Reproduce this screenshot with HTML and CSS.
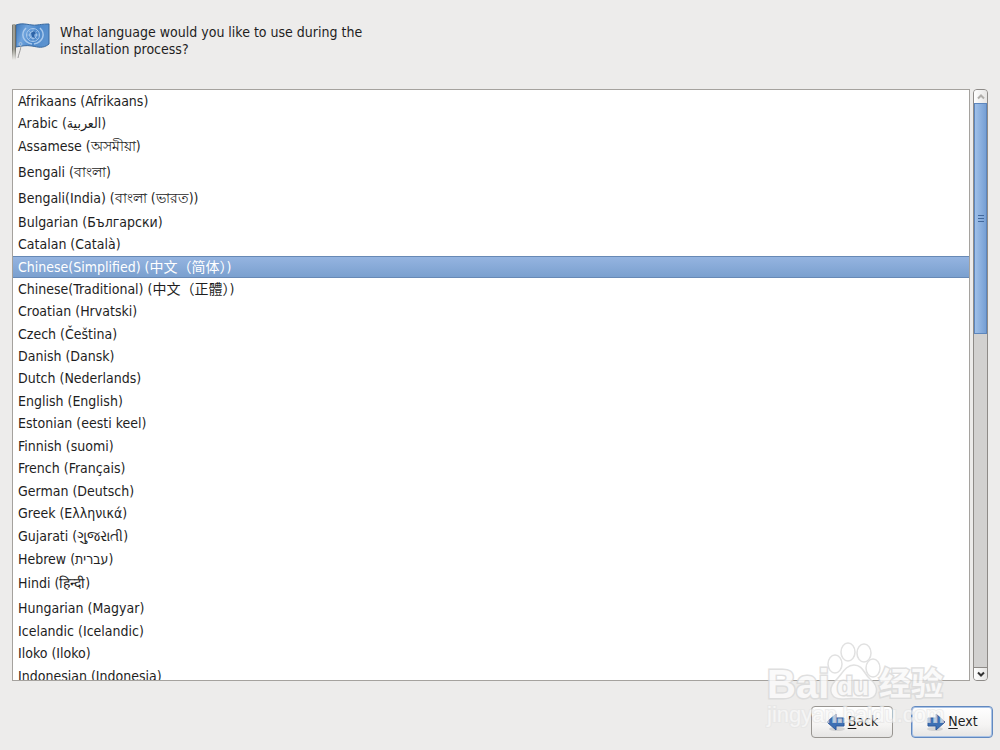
FILE: index.html
```
<!DOCTYPE html>
<html lang="en">
<head>
<meta charset="utf-8">
<title>Installation language</title>
<link rel="stylesheet" href="styles.css">
</head>
<body>
<form class="installer">
  <header class="prompt">
    <svg class="flag" viewBox="0 0 40 40" aria-hidden="true">
      <defs>
        <linearGradient id="cloth" x2="1" y2=".3"><stop offset="0" stop-color="#3f78ba"/><stop offset=".35" stop-color="#6ea3dd"/><stop offset=".65" stop-color="#4c88cb"/><stop offset="1" stop-color="#5b92cf"/></linearGradient>
        <linearGradient id="pole"><stop offset="0" stop-color="#66665f"/><stop offset=".5" stop-color="#b5b5aa"/><stop offset="1" stop-color="#55554f"/></linearGradient>
        <linearGradient id="fade" x2="0" y2="1"><stop offset=".7" stop-color="#ecebe9" stop-opacity="0"/><stop offset="1" stop-color="#ecebe9"/></linearGradient>
      </defs>
      <path d="M4 4C12 1 18 5 25 4S34 3 37 3V23C31 28 26 26 20 25S10 25 4 26Z" fill="url(#cloth)" stroke="#39699f"/>
      <g fill="none" stroke="#a9c9ec">
        <circle cx="21" cy="14" r="6.500"/><circle cx="21" cy="14" r="3.500" fill="#6b9fd9"/>
        <path d="M14 7C8 13 11 21 20 23M28 7C34 13 31 21 22 23" stroke-width="1.5"/>
        <path d="M21 8V20M15 14H27M16 9L26 19M26 9L16 19" stroke-width=".6"/>
      </g>
      <path d="M19 12l3-2 2 2-2 2 1 3-3-1z" fill="#2c64a8"/>
      <path d="M0 4Q2 2 4 4V39H0Z" fill="url(#pole)"/>
      <path d="M0 4Q2 2 4 4V39H0Z" fill="url(#fade)"/>
      <path d="M8 24C10 27 7 31 6 37M8 21V25" fill="none" stroke="#999"/>
      <circle cx="8.500" cy="23" r="1.500" fill="#6aa0dc" stroke="#c8d8e8" stroke-width=".6"/>
    </svg>
    <label class="question" for="language">What language would you like to use during the installation process?</label>
  </header>
  <main class="chooser">
    <select class="languages" id="language" name="language" size="26">
      <option>Afrikaans (Afrikaans)</option>
      <option class="loose">Arabic (العربية)</option>
      <option class="tall">Assamese (অসমীয়া)</option>
      <option class="taller">Bengali (বাংলা)</option>
      <option class="taller">Bengali(India) (বাংলা (ভারত))</option>
      <option>Bulgarian (Български)</option>
      <option class="loose">Catalan (Català)</option>
      <option class="cjk" selected>Chinese(Simplified) (中文（简体）)</option>
      <option class="cjk">Chinese(Traditional) (中文（正體）)</option>
      <option class="loose">Croatian (Hrvatski)</option>
      <option>Czech (Čeština)</option>
      <option>Danish (Dansk)</option>
      <option class="loose">Dutch (Nederlands)</option>
      <option>English (English)</option>
      <option class="loose">Estonian (eesti keel)</option>
      <option>Finnish (suomi)</option>
      <option class="loose">French (Français)</option>
      <option>German (Deutsch)</option>
      <option class="loose">Greek (Ελληνικά)</option>
      <option class="loose">Gujarati (ગુજરાતી)</option>
      <option class="loose">Hebrew (עברית)</option>
      <option class="taller">Hindi (हिन्दी)</option>
      <option class="loose">Hungarian (Magyar)</option>
      <option>Icelandic (Icelandic)</option>
      <option class="loose">Iloko (Iloko)</option>
      <option>Indonesian (Indonesia)</option>
    </select>
    <div class="scrollbar">
      <button class="step step-up" type="button" aria-label="Scroll up" disabled><svg viewBox="0 0 8 6"><path d="M1 4.500L4 1.500L7 4.500"/></svg></button>
      <div class="track"><div class="thumb"><i></i><i></i><i></i></div></div>
      <button class="step step-down" type="button" aria-label="Scroll down"><svg viewBox="0 0 8 6"><path d="M1 1.500L4 4.500L7 1.500"/></svg></button>
    </div>
  </main>
  <footer class="actions">
    <button class="action" type="button">
      <svg class="arrow" viewBox="0 0 20 20" aria-hidden="true"><ellipse cx="11" cy="17" rx="8" ry="2" fill="#d4d4d4"/><path d="M1 10L10 2V6H18V14H10V18Z" fill="#3d70b4" stroke="#2b579a"/></svg>
      <span><u>B</u>ack</span>
    </button>
    <button class="action action-default" type="submit">
      <svg class="arrow" viewBox="0 0 20 20" aria-hidden="true"><ellipse cx="9" cy="17" rx="8" ry="2" fill="#d4d4d4"/><path d="M19 10L10 2V6H2V14H10V18Z" fill="#3d70b4" stroke="#2b579a"/></svg>
      <span><u>N</u>ext</span>
    </button>
  </footer>
</form>
<div class="watermark">
  <svg class="paw" viewBox="0 0 54 60" aria-hidden="true">
    <g fill="#fff" fill-opacity=".85" stroke="#dcdcdc" stroke-width="1.500">
      <ellipse cx="8" cy="22" rx="7" ry="9"/><ellipse cx="21" cy="10" rx="7" ry="9"/><ellipse cx="37" cy="11" rx="7" ry="9"/><ellipse cx="46" cy="26" rx="7" ry="9"/>
      <path d="M27 23C36 23 37 32 43 37C54 46 50 57 39 57C31 57 24 56 17 57C4 58 0 48 8 39C15 33 18 23 27 23Z"/>
    </g>
  </svg>
  <div class="brand"><span class="bai">Bai</span><span class="du">du</span><span class="jingyan">经验</span></div>
  <div class="site">jingyan.baidu.com</div>
</div>
</body>
</html>
```
FILE: styles.css
```
* { box-sizing: border-box; }
body {
  margin: 0;
  background: #edeceb;
  color: #1e1e1e;
  font: 14px/22px "DejaVu Sans Condensed", "DejaVu Sans", "Noto Sans CJK SC", sans-serif;
}
.installer {
  display: flex;
  flex-direction: column;
  height: 100vh;
}
.prompt {
  display: flex;
  gap: 8px;
  height: 89px;
  padding: 21px 12px 0;
}
.flag { width: 40px; height: 40px; flex: none; }
.question {
  max-width: 330px;
  padding-top: 3px;
  line-height: 17px;
}
.chooser {
  display: flex;
  flex: 1;
  gap: 3px;
  min-height: 0;
  padding: 0 12px;
}
.languages {
  flex: 1;
  min-width: 0;
  height: 100%;
  padding: 0;
  border: 1px solid #a5a29e;
  border-radius: 0;
  outline: none;
  background: #fff;
  color: #1e1e1e;
  font: inherit;
  scrollbar-width: none;
}
.languages option {
  min-height: 0;
  height: 22px;
  padding: 3px 5px 0;
}
.languages .loose { height: 23px; }
.languages .tall { height: 24px; padding-top: 0; }
.languages .taller { height: 26px; padding-top: 2px; }
.languages .cjk { padding-top: 0; }
.languages option:checked {
  background-image: linear-gradient(#96b5e1, #799fce);
  box-shadow: inset 0 1px #6789b5, inset 0 -1px #6789b5;
  -webkit-text-fill-color: #fff;
}
.scrollbar {
  display: flex;
  flex-direction: column;
  width: 15px;
  border: 1px solid #8e8b88;
  border-radius: 4px;
  overflow: hidden;
  background: #d2d1d0;
}
.step {
  display: grid;
  place-items: center;
  height: 13px;
  padding: 0;
  border: 0;
  background: linear-gradient(90deg, #fff, #e6e5e4);
}
.step svg { width: 8px; height: 6px; fill: none; stroke: #333; stroke-width: 2; }
.step-up svg { stroke: #b0aeab; }
.step-down { border-top: 1px solid #8e8b88; }
.track { flex: 1; }
.thumb {
  display: flex;
  flex-direction: column;
  align-items: center;
  justify-content: center;
  gap: 2px;
  height: 41%;
  border: 1px solid #5d86bd;
  background: linear-gradient(90deg, #9fc0e9, #769fd4);
}
.thumb i { width: 6px; height: 1px; background: #41689c; }
.actions {
  display: flex;
  justify-content: flex-end;
  gap: 18px;
  padding: 25px 7px 12px;
}
.action {
  display: flex;
  align-items: center;
  justify-content: center;
  gap: 2px;
  width: 82px;
  height: 32px;
  padding: 0;
  border: 1px solid #989591;
  border-radius: 4px;
  background: linear-gradient(#fff, #f5f4f3 60%, #e6e5e4);
  color: #1e1e1e;
  font: inherit;
}
.action-default {
  border-color: #6289c0;
  box-shadow: inset 0 0 0 1px #a9c3e6;
}
.action span { padding-bottom: 2px; }
.action u { text-underline-offset: 2px; }
.arrow { width: 20px; height: 20px; }
.watermark {
  position: absolute;
  right: 54px;
  bottom: 22px;
  width: 179px;
  height: 86px;
  color: #fafafa;
  font-family: "Liberation Sans", "Noto Sans CJK SC", sans-serif;
  font-weight: bold;
  opacity: .85;
  pointer-events: none;
}
.paw { position: absolute; left: 60px; top: 0; width: 54px; height: 60px; }
.brand {
  position: absolute;
  top: 22px;
  display: flex;
  font-size: 40px;
  line-height: 40px;
  -webkit-text-stroke: 3px #dadada;
  paint-order: stroke fill;
}
.bai { width: 70px; }
.du { width: 42px; font-size: 26px; line-height: 44px; }
.jingyan { font-size: 32px; }
.site {
  position: absolute;
  top: 62px;
  font-size: 22px;
  font-weight: normal;
  line-height: 22px;
  opacity: .8;
  -webkit-text-stroke: 2px #e6e6e6;
  paint-order: stroke fill;
}
```
